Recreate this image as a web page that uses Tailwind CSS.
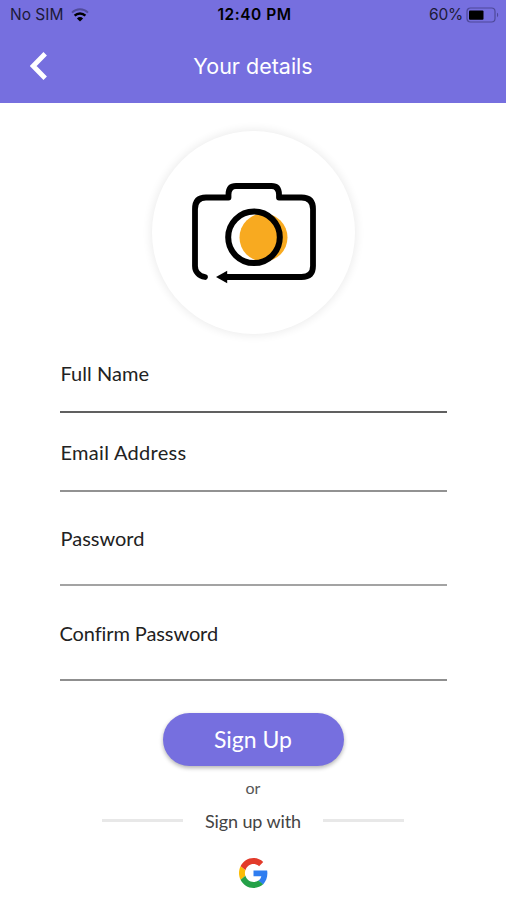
<!DOCTYPE html>
<html lang="en">
<head>
    <meta charset="UTF-8" />
    <meta name="viewport" content="width=device-width, initial-scale=1.0" />
    <title>Your details</title>
    <script src="https://cdn.jsdelivr.net/npm/@tailwindcss/browser@4"></script>
</head>
<body class="bg-white font-['Lato',sans-serif] text-[#222222] h-[900px] overflow-hidden">

    <header class="bg-[#766fdf] h-[102.5px] font-['Inter',sans-serif]">
        <!-- Status bar -->
        <div class="h-[29px] pl-[10px] pr-[7px] grid grid-cols-3 items-center text-[#1c1a38] text-[15.5px] leading-none">
            <div class="flex items-center gap-[8px]">
                <span class="whitespace-nowrap">No SIM</span>
                <svg class="w-[18px] h-[14px]" viewBox="0 0 18 14" fill="none">
                    <path d="M1 4.6a11.5 11.5 0 0 1 16 0" stroke="#504b9c" stroke-width="2" />
                    <path d="M3.6 7.6a7.8 7.8 0 0 1 10.8 0" stroke="#000" stroke-width="2.4" />
                    <path d="M5.9 10.4a4.5 4.5 0 0 1 6.2 0L9 13.6z" fill="#000" />
                </svg>
            </div>
            <div class="text-center font-semibold text-black tracking-[0.5px] whitespace-nowrap">12:40 PM</div>
            <div class="flex items-center justify-end gap-[3px]">
                <span class="tracking-[-0.2px]">60%</span>
                <svg class="w-[33px] h-[16px]" viewBox="0 0 33 16" fill="none">
                    <rect x="1" y="1" width="28" height="14" rx="3.5" stroke="#4e4999" stroke-width="1.2" />
                    <rect x="3" y="3.4" width="14.5" height="9.4" rx="1" fill="#000" />
                    <path d="M31 5.8v4.4c1.6-.6 1.6-3.8 0-4.4z" fill="#4e4999" />
                </svg>
            </div>
        </div>
        <!-- Title bar -->
        <div class="h-[73px] px-[30px] grid grid-cols-[40px_1fr_40px] items-center">
            <svg class="w-[17px] h-[28px]" viewBox="0 0 17 28" fill="none" stroke="#fff" stroke-width="4.8">
                <path d="M15.2 1.7L3.2 14L15.2 26.3" />
            </svg>
            <h1 class="pt-px text-center text-white text-[21.5px] whitespace-nowrap">Your details</h1>
        </div>
    </header>

    <main class="flex flex-col items-center pt-[28px]">
        <!-- Photo picker -->
        <div class="size-[203px] rounded-full bg-white shadow-[0_0_8px_2px_rgba(0,0,0,0.07)] flex items-center justify-center">
            <svg class="w-[126px] h-[104px]" viewBox="190 180 126 104" fill="none">
                <circle cx="263.5" cy="237.5" r="24" fill="#f8aa20" />
                <circle cx="254" cy="237.3" r="25.8" stroke="#000" stroke-width="6" />
                <path d="M205 277C199 276 195 272 195 266V209Q195 197.500 206 197.500H228.500V194.500Q228.500 186 236 186H271.500Q279 186 279 194.500V197.500H301.500Q313 197.500 313 209V266Q313 277 301.500 277H226" stroke="#000" stroke-width="5.800" stroke-linecap="round" stroke-linejoin="round" />
                <path d="M216 277L227.200 270.700V283.300z" fill="#000" />
            </svg>
        </div>

        <form class="w-[387px] text-[20px] leading-[24px]">
            <div class="h-[79px] pt-[27px] pl-px border-b-2 border-[#606060]">
                <label class="tracking-[0.05px]">Full Name</label>
            </div>
            <div class="h-[79px] pt-[27px] pl-px border-b-2 border-[#929292]">
                <label class="tracking-[0.3px]">Email Address</label>
            </div>
            <div class="h-[94px] pt-[34px] pl-px border-b-2 border-[#a3a3a3]">
                <label>Password</label>
            </div>
            <div class="h-[95px] pt-[35px] border-b-2 border-[#8f8f8f]">
                <label class="tracking-[-0.1px]">Confirm Password</label>
            </div>
        </form>

        <button class="mt-[32px] w-[181px] h-[53px] pt-px rounded-full bg-[#766fdf] text-white text-[23px] shadow-[0_2px_4px_rgba(0,0,0,0.3)]">Sign Up</button>

        <p class="mt-[12px] text-[16px] leading-[20px] text-[#555555]">or</p>

        <div class="mt-[11px] w-[303px] flex items-center justify-between text-[18px] leading-[24px] text-[#444444]">
            <span class="w-[81px] h-[3px] bg-[#e8e8e8]"></span>
            <span class="tracking-[-0.1px]">Sign up with</span>
            <span class="w-[81px] h-[3px] bg-[#e8e8e8]"></span>
        </div>

        <svg class="mt-[25px] w-[29px] h-[30px]" viewBox="0 0 48 48" preserveAspectRatio="none">
            <path fill="#e23b2b" d="M24 9.500c3.540 0 6.710 1.220 9.210 3.600l6.850-6.850C35.900 2.380 30.470 0 24 0 14.620 0 6.510 5.380 2.560 13.220l7.980 6.190C12.430 13.720 17.740 9.500 24 9.500z" />
            <path fill="#2f7df0" d="M46.980 24.550c0-1.570-.150-3.090-.380-4.550H24v9.020h12.940c-.580 2.960-2.260 5.480-4.780 7.180l7.730 6c4.510-4.180 7.090-10.360 7.090-17.650z" />
            <path fill="#fbbc05" d="M10.530 28.590c-.480-1.450-.760-2.990-.760-4.590s.270-3.140.760-4.590l-7.980-6.190C.920 16.460 0 20.120 0 24c0 3.880.920 7.540 2.560 10.780l7.970-6.190z" />
            <path fill="#24a148" d="M24 48c6.480 0 11.930-2.130 15.890-5.810l-7.730-6c-2.150 1.450-4.920 2.300-8.160 2.300-6.260 0-11.570-4.220-13.470-9.910l-7.980 6.190C6.510 42.620 14.620 48 24 48z" />
        </svg>
    </main>

</body>
</html>
